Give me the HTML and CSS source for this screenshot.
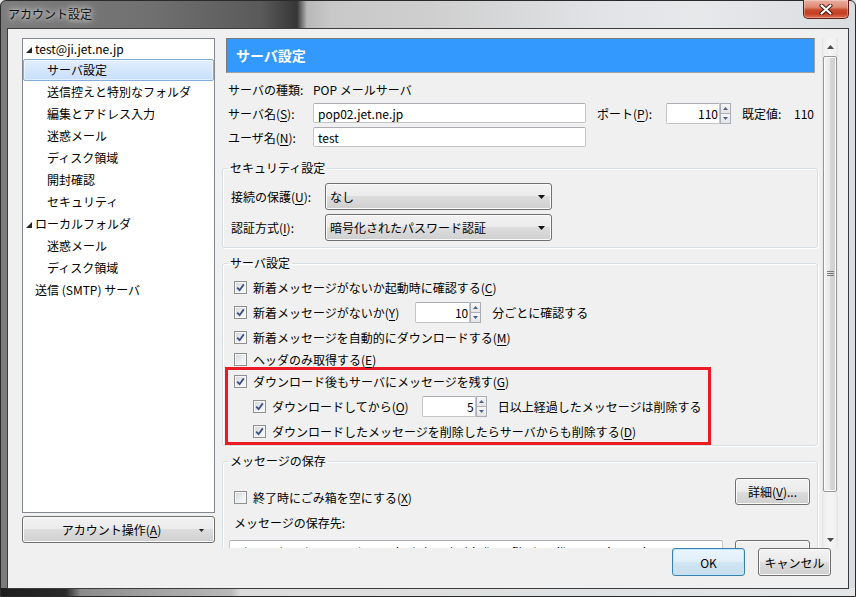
FILE: index.html
```html
<!DOCTYPE html>
<html lang="ja">
<head>
    <meta charset="UTF-8">
    <title>アカウント設定</title>
    <link rel="stylesheet" href="styles.css">
</head>
<body>
<div class="window">
    <div class="titlebar">
        <span class="title">アカウント設定</span>
        <button class="close-btn" type="button">
            <svg width="14" height="11" viewBox="0 0 14 11">
                <path d="M2.5 1.5 L11.5 9.5 M11.5 1.5 L2.5 9.5" stroke="#3a1a14" stroke-width="4" stroke-linecap="round"/>
                <path d="M2.5 1.5 L11.5 9.5 M11.5 1.5 L2.5 9.5" stroke="#fff" stroke-width="2.2" stroke-linecap="round"/>
            </svg>
        </button>
    </div>

    <div class="client">
        <div class="main">
            <div class="sidebar">
                <ul class="tree">
                    <li class="node root first">
                        <svg class="twisty" width="6" height="6" viewBox="0 0 6 6"><polygon points="6,0 6,6 0,6" fill="#262626"/></svg>test@ji.jet.ne.jp
                    </li>
                    <li class="node child selected">サーバ設定</li>
                    <li class="node child">送信控えと特別なフォルダ</li>
                    <li class="node child">編集とアドレス入力</li>
                    <li class="node child">迷惑メール</li>
                    <li class="node child">ディスク領域</li>
                    <li class="node child">開封確認</li>
                    <li class="node child">セキュリティ</li>
                    <li class="node root">
                        <svg class="twisty" width="6" height="6" viewBox="0 0 6 6"><polygon points="6,0 6,6 0,6" fill="#262626"/></svg>ローカルフォルダ
                    </li>
                    <li class="node child">迷惑メール</li>
                    <li class="node child">ディスク領域</li>
                    <li class="node root leaf">送信 (SMTP) サーバ</li>
                </ul>
                <button class="btn account-btn" type="button">
                    <span>アカウント操作(<u>A</u>)</span>
                    <svg class="menu-arrow" width="5" height="3" viewBox="0 0 5 3"><polygon points="0,0 5,0 2.5,3" fill="#222"/></svg>
                </button>
            </div>

            <div class="pane">
                <div class="pane-scroll">
                    <div class="page-header">サーバ設定</div>

                    <div class="info">
                        <div class="info-row short">
                            <span class="info-label">サーバの種類:</span>
                            <span>POP メールサーバ</span>
                        </div>
                        <div class="info-row">
                            <span class="info-label">サーバ名(<u>S</u>):</span>
                            <input class="field wide" type="text" value="pop02.jet.ne.jp">
                            <span class="port-label">ポート(<u>P</u>):</span>
                            <span class="spin port">
                                <input class="field num" type="text" value="110">
                                <span class="spin-btns">
                                    <span class="spin-btn"><svg width="5" height="3" viewBox="0 0 5 3"><polygon points="0,3 5,3 2.5,0" fill="#4d6185"/></svg></span>
                                    <span class="spin-btn"><svg width="5" height="3" viewBox="0 0 5 3"><polygon points="0,0 5,0 2.5,3" fill="#4d6185"/></svg></span>
                                </span>
                            </span>
                            <span class="default-label">既定値:</span>
                            <span>110</span>
                        </div>
                        <div class="info-row">
                            <span class="info-label">ユーザ名(<u>N</u>):</span>
                            <input class="field wide" type="text" value="test">
                        </div>
                    </div>

                    <fieldset class="group security">
                        <legend>セキュリティ設定</legend>
                        <div class="combo-row">
                            <span class="combo-label">接続の保護(<u>U</u>):</span>
                            <div class="combo"><span>なし</span><svg width="7" height="4" viewBox="0 0 7 4"><polygon points="0,0 7,0 3.5,4" fill="#111"/></svg></div>
                        </div>
                        <div class="combo-row">
                            <span class="combo-label">認証方式(<u>I</u>):</span>
                            <div class="combo"><span>暗号化されたパスワード認証</span><svg width="7" height="4" viewBox="0 0 7 4"><polygon points="0,0 7,0 3.5,4" fill="#111"/></svg></div>
                        </div>
                    </fieldset>

                    <fieldset class="group server">
                        <legend>サーバ設定</legend>
                        <div class="check-row">
                            <span class="check"><svg width="9" height="9" viewBox="0 0 9 9"><path d="M1.2 4.6 L3.6 7.2 L7.8 1.4" fill="none" stroke="#3b4f80" stroke-width="1.8"/></svg></span>
                            <span>新着メッセージがないか起動時に確認する(<u>C</u>)</span>
                        </div>
                        <div class="check-row tall">
                            <span class="check"><svg width="9" height="9" viewBox="0 0 9 9"><path d="M1.2 4.6 L3.6 7.2 L7.8 1.4" fill="none" stroke="#3b4f80" stroke-width="1.8"/></svg></span>
                            <span>新着メッセージがないか(<u>Y</u>)</span>
                            <span class="spin minutes">
                                <input class="field num" type="text" value="10">
                                <span class="spin-btns">
                                    <span class="spin-btn"><svg width="5" height="3" viewBox="0 0 5 3"><polygon points="0,3 5,3 2.5,0" fill="#4d6185"/></svg></span>
                                    <span class="spin-btn"><svg width="5" height="3" viewBox="0 0 5 3"><polygon points="0,0 5,0 2.5,3" fill="#4d6185"/></svg></span>
                                </span>
                            </span>
                            <span>分ごとに確認する</span>
                        </div>
                        <div class="check-row">
                            <span class="check"><svg width="9" height="9" viewBox="0 0 9 9"><path d="M1.2 4.6 L3.6 7.2 L7.8 1.4" fill="none" stroke="#3b4f80" stroke-width="1.8"/></svg></span>
                            <span>新着メッセージを自動的にダウンロードする(<u>M</u>)</span>
                        </div>
                        <div class="check-row">
                            <span class="check"></span>
                            <span>ヘッダのみ取得する(<u>E</u>)</span>
                        </div>

                        <div class="highlight">
                            <div class="check-row">
                                <span class="check"><svg width="9" height="9" viewBox="0 0 9 9"><path d="M1.2 4.6 L3.6 7.2 L7.8 1.4" fill="none" stroke="#3b4f80" stroke-width="1.8"/></svg></span>
                                <span>ダウンロード後もサーバにメッセージを残す(<u>G</u>)</span>
                            </div>
                            <div class="check-row tall nested">
                                <span class="check"><svg width="9" height="9" viewBox="0 0 9 9"><path d="M1.2 4.6 L3.6 7.2 L7.8 1.4" fill="none" stroke="#3b4f80" stroke-width="1.8"/></svg></span>
                                <span>ダウンロードしてから(<u>O</u>)</span>
                                <span class="spin days">
                                    <input class="field num" type="text" value="5">
                                    <span class="spin-btns">
                                        <span class="spin-btn"><svg width="5" height="3" viewBox="0 0 5 3"><polygon points="0,3 5,3 2.5,0" fill="#4d6185"/></svg></span>
                                        <span class="spin-btn"><svg width="5" height="3" viewBox="0 0 5 3"><polygon points="0,0 5,0 2.5,3" fill="#4d6185"/></svg></span>
                                    </span>
                                </span>
                                <span>日以上経過したメッセージは削除する</span>
                            </div>
                            <div class="check-row nested">
                                <span class="check"><svg width="9" height="9" viewBox="0 0 9 9"><path d="M1.2 4.6 L3.6 7.2 L7.8 1.4" fill="none" stroke="#3b4f80" stroke-width="1.8"/></svg></span>
                                <span>ダウンロードしたメッセージを削除したらサーバからも削除する(<u>D</u>)</span>
                            </div>
                        </div>
                    </fieldset>

                    <fieldset class="group storage">
                        <legend>メッセージの保存</legend>
                        <div class="storage-top">
                            <div class="check-row">
                                <span class="check"></span>
                                <span>終了時にごみ箱を空にする(<u>X</u>)</span>
                            </div>
                            <button class="btn small" type="button">詳細(<u>V</u>)...</button>
                        </div>
                        <div class="storage-label">メッセージの保存先:</div>
                        <div class="storage-path">
                            <input class="field path" type="text" value="C:\Users\test\AppData\Roaming\Thunderbird\Profiles\mail\pop02.jet.ne.jp">
                            <button class="btn small" type="button">参照(<u>R</u>)...</button>
                        </div>
                    </fieldset>
                </div>

                <div class="scrollbar">
                    <span class="sb-arrow"><svg width="7" height="4" viewBox="0 0 7 4"><polygon points="0,4 7,4 3.5,0" fill="#4a4a4a"/></svg></span>
                    <div class="sb-track">
                        <div class="sb-thumb">
                            <svg width="7" height="6" viewBox="0 0 7 6"><path d="M0 0.5 H7 M0 2.5 H7 M0 4.5 H7" stroke="#7a7a7a" stroke-width="1"/></svg>
                        </div>
                    </div>
                    <span class="sb-arrow"><svg width="7" height="4" viewBox="0 0 7 4"><polygon points="0,0 7,0 3.5,4" fill="#4a4a4a"/></svg></span>
                </div>
            </div>
        </div>

        <div class="footer">
            <button class="btn dialog default" type="button">OK</button>
            <button class="btn dialog" type="button">キャンセル</button>
        </div>
    </div>
</div>
</body>
</html>
```

FILE: styles.css
```css
* {
    box-sizing: border-box;
}

body {
    margin: 0;
    width: 856px;
    height: 597px;
    overflow: hidden;
    font-family: "Noto Sans CJK JP", "Noto Sans", sans-serif;
    font-size: 12px;
    color: #000;
    background: #dfe2e5;
}

u {
    text-decoration: underline;
    text-underline-offset: 2px;
}

.window {
    width: 856px;
    height: 597px;
    display: flex;
    flex-direction: column;
    padding: 0 6px 7px 6px;
    border: 1px solid #2a2a2a;
    border-radius: 6px 6px 0 0;
    background:
        linear-gradient(to right, #1c1c1c 0, #2a2a2a 65px, #8c8c8c 80px, #b9b9b9 230px, #dcdcdc 240px, #e4e6e8 100%) left bottom / 100% 8px no-repeat,
        linear-gradient(to right, #7c7c7c 0, #707070 150px, #5a5a5a 260px, #363636 296px, #b8b8b8 306px, #c8c8c8 330px, #cfcfcf 430px, #e1e3e6 600px, #e6e8ea 700px, #dadde0 100%);
}

/* title bar */
.titlebar {
    height: 27px;
    display: flex;
    justify-content: space-between;
    align-items: flex-start;
}

.title {
    padding: 5px 0 0 1px;
    line-height: 16px;
    font-size: 12px;
    color: #111;
    text-shadow: 0 0 8px #fff, 0 0 4px rgba(255, 255, 255, 0.8);
}

.close-btn {
    width: 46px;
    height: 19px;
    margin: -1px 0 0 0;
    padding: 0;
    display: flex;
    align-items: center;
    justify-content: center;
    border: 1px solid #5c1f15;
    border-top: none;
    border-radius: 0 0 5px 5px;
    background: linear-gradient(#eab0a0 0, #de8a74 40%, #c84a2c 55%, #c63e22 75%, #dd6f52 100%);
    box-shadow: inset 0 0 0 1px rgba(255, 255, 255, 0.3);
}

/* client area */
.client {
    flex: 1;
    display: flex;
    flex-direction: column;
    background: #f0f0f0;
    border: 1px solid #3c3c3c;
    padding: 9px 9px 0 14px;
}

.main {
    height: 510px;
    display: flex;
    gap: 7px;
}

/* left side */
.sidebar {
    width: 193px;
    display: flex;
    flex-direction: column;
    gap: 3px;
}

.tree {
    height: 475px;
    margin: 0;
    padding: 0;
    list-style: none;
    background: #fff;
    border: 1px solid #828790;
}

.node {
    height: 22px;
    line-height: 22px;
    white-space: nowrap;
}

.node.first {
    height: 20px;
    line-height: 20px;
}

.node.root {
    display: flex;
    align-items: center;
    padding-left: 3px;
}

.node.root .twisty {
    margin: 2px 3px 0 0;
}

.node.leaf {
    padding-left: 12px;
}

.node.child {
    padding-left: 24px;
}

.node.selected {
    border: 1px solid #84acdd;
    border-radius: 2px;
    line-height: 20px;
    padding-left: 23px;
    background: linear-gradient(#e3effd, #c6defc);
    box-shadow: inset 0 0 0 1px rgba(255, 255, 255, 0.5);
}

.btn {
    font: inherit;
    color: #000;
    padding: 0;
    border: 1px solid #707070;
    border-radius: 3px;
    background: linear-gradient(#f2f2f2 0, #ebebeb 50%, #dddddd 50%, #cfcfcf 100%);
    box-shadow: inset 0 0 0 1px #fbfbfb;
}

.account-btn {
    height: 27px;
    display: flex;
    align-items: center;
    justify-content: center;
    position: relative;
    padding-right: 14px;
}

.account-btn .menu-arrow {
    position: absolute;
    right: 10px;
    top: 12px;
}

/* right side */
.pane {
    width: 616px;
    display: flex;
    gap: 2px;
}

.pane-scroll {
    width: 598px;
    overflow: hidden;
}

.page-header {
    height: 35px;
    margin: 0 5px 5px 4px;
    padding-left: 9px;
    line-height: 33px;
    font-size: 14px;
    font-weight: bold;
    color: #fff;
    background: #3399ff;
    border: 1px solid #7a7a7a;
    border-right-color: #a0a0a0;
    border-bottom-color: #a0a0a0;
}

.info {
    padding-left: 6px;
}

.info-row {
    height: 24px;
    display: flex;
    align-items: center;
}

.info-row.short {
    height: 23px;
}

.info-label {
    width: 85px;
}

.field {
    font: inherit;
    height: 20px;
    padding: 0 4px;
    border: 1px solid #c4c4c4;
    border-top-color: #abadb3;
    border-radius: 2px;
    background: #fff;
    color: #000;
}

.field.wide {
    width: 273px;
}

.port-label {
    width: 69px;
    margin-left: 11px;
}

.default-label {
    width: 52px;
    margin-left: 11px;
}

.spin {
    display: flex;
    height: 21px;
}

.spin .num {
    height: 21px;
    text-align: right;
    padding: 0 1px 0 0;
    border-radius: 2px 0 0 2px;
}

.port .num {
    width: 54px;
}

.minutes {
    margin: 0 11px 0 16px;
}

.minutes .num {
    width: 55px;
}

.days {
    margin: 0 11px 0 13px;
}

.days .num {
    width: 54px;
}

.spin-btns {
    width: 11px;
    display: flex;
    flex-direction: column;
}

.spin-btn {
    flex: 1;
    display: flex;
    align-items: center;
    justify-content: center;
    border: 1px solid #a7aeb8;
    background: linear-gradient(#f7f7f7, #e4e4e4);
}

.spin-btn + .spin-btn {
    border-top: none;
}

/* group boxes */
.group {
    margin: 0 2px 0 0;
    min-width: 0;
    border: 1px solid #d5dfe5;
    border-radius: 3px;
    box-shadow: inset 1px 1px 0 #fff, 1px 1px 0 #fff;
}

.group legend {
    padding: 0 2px;
    line-height: 14px;
    margin-left: -6px;
}

.security {
    margin-top: 12px;
    padding: 6px 7px 4px 8px;
}

.security legend {
    margin-left: -3px;
}

.combo-row {
    height: 31px;
    display: flex;
    align-items: center;
}

.combo-label {
    width: 94px;
}

.combo {
    width: 227px;
    height: 27px;
    display: flex;
    align-items: center;
    justify-content: space-between;
    padding: 0 6px 0 4px;
    border: 1px solid #707070;
    border-radius: 3px;
    background: linear-gradient(#f2f2f2 0, #ebebeb 50%, #dddddd 50%, #cfcfcf 100%);
    box-shadow: inset 0 0 0 1px #fbfbfb;
}

.server {
    margin-top: 8px;
    padding: 6px 7px 0 11px;
}

.check-row {
    height: 22px;
    display: flex;
    align-items: center;
    white-space: nowrap;
}

.check-row.tall {
    height: 28px;
}

.check-row.nested {
    padding-left: 19px;
}

.check {
    width: 13px;
    height: 13px;
    flex: none;
    margin-right: 6px;
    display: flex;
    align-items: center;
    justify-content: center;
    border: 1px solid #8e8f8f;
    background: linear-gradient(135deg, #d2d5da 0, #eef0f2 60%, #fbfbfb 100%);
    box-shadow: inset 0 0 0 1px #f6f6f6;
}

.highlight {
    width: 486px;
    margin: -3px 0 0 -9px;
    padding-left: 6px;
    border: 3px solid #ec1a22;
}

.storage {
    margin-top: 8px;
    padding: 10px 7px 0 11px;
}

.storage-top {
    display: flex;
    justify-content: space-between;
    align-items: flex-start;
}

.storage-top .check-row {
    margin-top: 8px;
}

.btn.small {
    width: 75px;
    height: 27px;
}

.storage-label {
    line-height: 22px;
    margin-top: 4px;
}

.storage-path {
    margin-top: 6px;
    display: flex;
    justify-content: space-between;
    margin-left: -5px;
}

.field.path {
    width: 494px;
    height: 22px;
    color: #000;
}

/* scrollbar */
.scrollbar {
    width: 16px;
    display: flex;
    flex-direction: column;
    background: linear-gradient(to right, #e2e2e2 0, #efefef 2px, #f5f5f5 50%, #efefef 14px, #e2e2e2 100%);
}

.sb-arrow {
    height: 17px;
    display: flex;
    align-items: center;
    justify-content: center;
}

.sb-track {
    flex: 1;
    padding: 1px 1px 0 1px;
}

.sb-thumb {
    height: 436px;
    display: flex;
    align-items: center;
    justify-content: center;
    border: 1px solid #979797;
    border-radius: 2px;
    background: linear-gradient(to right, #f4f4f4 0, #e8e8e8 50%, #d6d6d6 51%, #cfcfcf 100%);
    box-shadow: inset 0 0 0 1px #fbfbfb;
}

/* dialog buttons */
.footer {
    height: 39px;
    display: flex;
    justify-content: flex-end;
    align-items: flex-start;
    gap: 13px;
    padding-right: 8px;
}

.btn.dialog {
    width: 73px;
    height: 28px;
}

.btn.default {
    border-color: #3c7fb1;
    box-shadow: inset 0 0 0 1px #bfe7fb;
    background: linear-gradient(#eaf6fd 0, #e0eef8 50%, #d2e6f3 50%, #c6ddee 100%);
}
```
